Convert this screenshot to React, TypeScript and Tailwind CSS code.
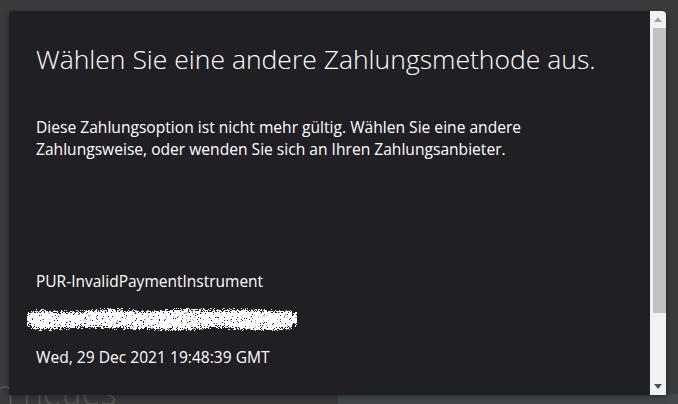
import React from "react";

function Scribble() {
  const rects: React.ReactElement[] = [];
  let seed = 98765;
  const rnd = () => {
    seed = (seed * 1103515245 + 12345) & 0x7fffffff;
    return seed / 0x7fffffff;
  };
  const W = 270;
  const H = 24;
  for (let x = 0; x < W; x += 1) {
    const center = 12 + Math.sin(x / 17) * 0.8;
    let half = 9.5 + Math.sin(x / 11) * 0.8;
    if (x < 100) half -= 1;
    if (x < 4 || x > W - 6) half -= 3;
    for (let y = 0; y < H; y += 1) {
      const d = Math.abs(y - center);
      const p = d < half - 2 ? 0.96 : d < half ? 0.7 : d < half + 1.5 ? 0.3 : 0;
      if (rnd() < p) {
        const r = rnd();
        const fill =
          r < 0.93 ? "#ffffff" : r < 0.955 ? "#dcdcdc" : r < 0.97 ? "#e0a070" : r < 0.985 ? "#80b0f0" : "#c04050";
        rects.push(<rect key={`${x}-${y}`} x={x} y={y} width={1} height={1} fill={fill} />);
      }
    }
  }
  return (
    <svg width={W} height={H} viewBox={`0 0 ${W} ${H}`} className="block" shapeRendering="crispEdges">
      {rects}
    </svg>
  );
}

export default function App() {
  const font = { fontFamily: '"Open Sans", "Noto Sans", sans-serif' };
  return (
    <div className="relative w-[678px] h-[404px] overflow-hidden bg-[#3b3b3b]" style={font}>
      {/* background page */}
      <div className="flex h-full flex-col">
        <div className="flex-1" />
        <div className="flex h-[10px] items-start">
          <div className="w-[338px] h-[10px] overflow-visible relative">
            <div className="absolute left-[-6px] top-[-22px] text-[34px] leading-[40px] text-[#5a5a5a] font-light">
              n neues
            </div>
          </div>
          <div className="flex-1 h-[10px] bg-[#45494c]" />
        </div>
      </div>

      {/* dialog */}
      <div className="absolute left-[9px] top-[11px] w-[657px] h-[384px] flex rounded-tl-[4px] rounded-tr-[4px] bg-[#202024] shadow-[0_2px_6px_rgba(0,0,0,0.4)] overflow-hidden">
        <div className="flex-1 pl-[27px] pt-[29px] text-white">
          <h1 className="text-[26.5px] leading-[38px] font-light text-white">
            Wählen Sie eine andere Zahlungsmethode aus.
          </h1>
          <p className="mt-[38px] text-[15.6px] leading-[22px] w-[540px]">
            Diese Zahlungsoption ist nicht mehr gültig. Wählen Sie eine andere Zahlungsweise, oder wenden Sie sich an Ihren Zahlungsanbieter.
          </p>
          <div className="mt-[110px] text-[15.5px] leading-[22px]">PUR-InvalidPaymentInstrument</div>
          <div className="mt-[15px] ml-[-9px]">
            <Scribble />
          </div>
          <div className="mt-[15px] text-[15.6px] leading-[22px]">Wed, 29 Dec 2021 19:48:39 GMT</div>
        </div>
        <div className="w-[16px] bg-[#f1f1f1] flex flex-col items-center">
          <div className="h-[17px] flex items-center justify-center">
            <svg width="8" height="5" viewBox="0 0 8 5">
              <polygon points="0,5 8,5 4,0" fill="#a3a3a3" />
            </svg>
          </div>
          <div className="w-[13px] ml-[3px] h-[285px] bg-[#c1c1c1]" />
          <div className="flex-1" />
          <div className="h-[17px] flex items-center justify-center">
            <svg width="8" height="5" viewBox="0 0 8 5">
              <polygon points="0,0 8,0 4,5" fill="#505050" />
            </svg>
          </div>
        </div>
      </div>
    </div>
  );
}
